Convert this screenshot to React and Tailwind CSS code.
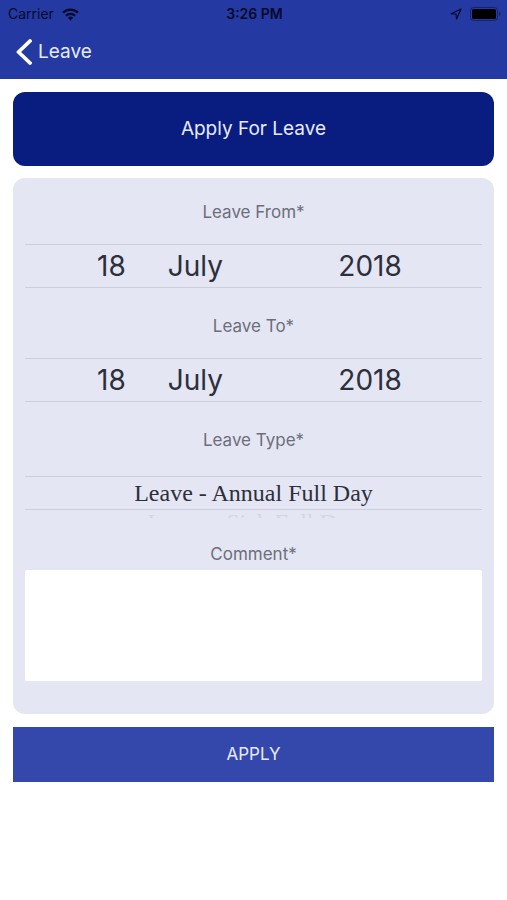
import { useState } from 'react'

const MONTHS = [
  'January', 'February', 'March', 'April', 'May', 'June',
  'July', 'August', 'September', 'October', 'November', 'December',
]
const DAYS  = Array.from({ length: 31 }, (_, i) => String(i + 1))
const YEARS = ['2017', '2018', '2019', '2020']

const LEAVE_TYPES = ['Leave - Annual Full Day', 'Leave - Sick Full Day']

const START = { day: '18', month: 'July', year: '2018' }

function WifiIcon() {
  return (
    <svg width="17" height="13" viewBox="0 0 17 13" fill="none" stroke="currentColor" strokeWidth="2.3">
      <path d="M1 4.7a10.8 10.8 0 0 1 15 0" />
      <path d="M3.9 7.7a6.6 6.6 0 0 1 9.2 0" />
      <path d="M8.5 12.6 5.9 9.9a3.7 3.7 0 0 1 5.2 0z" fill="currentColor" stroke="none" />
    </svg>
  )
}

function LocationIcon() {
  return (
    <svg width="12" height="12" viewBox="0 0 12 12" fill="none" stroke="currentColor" strokeWidth="1.2" strokeLinejoin="round">
      <path d="M11 1 1.2 5.8l4.8.2.6 5z" />
    </svg>
  )
}

function BatteryIcon() {
  return (
    <svg width="31" height="14" viewBox="0 0 31 14" fill="none">
      <rect x="0.5" y="0.5" width="27" height="13" rx="3" stroke="currentColor" strokeOpacity="0.45" />
      <rect x="2" y="2" width="24" height="10" rx="1.5" fill="black" />
      <path d="M29 4.8v4.4c1-.3 1.5-1.2 1.5-2.2s-.5-1.9-1.5-2.2z" fill="currentColor" fillOpacity="0.45" />
    </svg>
  )
}

function StatusBar() {
  return (
    <div className="grid h-7 grid-cols-3 items-center pr-1.5 pl-2 text-sm text-[#060a2a]">
      <div className="flex items-center gap-2">
        <span>Carrier</span>
        <WifiIcon />
      </div>
      <span className="text-center font-semibold">3:26 PM</span>
      <div className="flex items-center justify-end gap-2">
        <LocationIcon />
        <BatteryIcon />
      </div>
    </div>
  )
}

function PickerColumn({ label, options, value, onChange, className = '' }) {
  return (
    <select
      aria-label={label}
      value={value}
      onChange={(e) => onChange(e.target.value)}
      className={`w-full cursor-pointer appearance-none bg-transparent outline-none ${className}`}
    >
      {options.map((o) => <option key={o} value={o}>{o}</option>)}
    </select>
  )
}

function DateField({ id, label, value, onChange }) {
  const set = (key) => (v) => onChange({ ...value, [key]: v })

  return (
    <div role="group" aria-labelledby={id} className="mb-[26px]">
      <p id={id} className="mb-5 text-center text-[17px]/6 text-[#6c6e7a]">{label}</p>
      <div className="grid h-11 grid-cols-[101fr_213fr_144fr] items-center border-y border-[#cdcfdb] text-[28px]/10 text-[#2d2f3b]">
        <PickerColumn label="Day" options={DAYS} value={value.day} onChange={set('day')} className="text-right" />
        <PickerColumn label="Month" options={MONTHS} value={value.month} onChange={set('month')} className="pl-[42px]" />
        <PickerColumn label="Year" options={YEARS} value={value.year} onChange={set('year')} />
      </div>
    </div>
  )
}

export default function App() {
  const [from, setFrom]       = useState(START)
  const [to, setTo]           = useState(START)
  const [type, setType]       = useState(LEAVE_TYPES[0])
  const [comment, setComment] = useState('')

  const nextType = LEAVE_TYPES[LEAVE_TYPES.indexOf(type) + 1]

  return (
    <div className="min-h-screen bg-white font-['Inter',sans-serif]">
      <header className="bg-[#2439a2]">
        <StatusBar />
        <nav className="flex h-[51px] items-center px-4 pb-1">
          <a href="#back" className="flex items-center gap-1.5 text-[19px]/8 text-[#e6ebff]">
            <svg width="16" height="26" viewBox="0 0 16 26" fill="none" stroke="white" strokeWidth="3.8" strokeLinecap="round" strokeLinejoin="round">
              <path d="M14 2 2.5 13 14 24" />
            </svg>
            Leave
          </a>
        </nav>
      </header>

      <main className="px-[13px] py-[13px]">
        <h1 className="flex h-[74px] items-center justify-center rounded-xl bg-[#091c7f] text-[19px]/8 text-[#e6ebff]">
          Apply For Leave
        </h1>

        <form onSubmit={(e) => e.preventDefault()}>
          <div className="mt-3 mb-[13px] rounded-xl bg-[#e4e6f3] px-3 pt-[22px] pb-[33px]">
            <DateField id="leave-from" label="Leave From*" value={from} onChange={setFrom} />
            <DateField id="leave-to" label="Leave To*" value={to} onChange={setTo} />

            <label htmlFor="leave-type" className="mb-6 block text-center text-[17px]/6 text-[#6c6e7a]">
              Leave Type*
            </label>
            <div className="mb-6 text-center font-['Liberation_Serif',serif] text-2xl">
              <select
                id="leave-type"
                value={type}
                onChange={(e) => setType(e.target.value)}
                className="block h-[34px] w-full cursor-pointer appearance-none border-y border-[#cdcfdb] text-center text-[#2d2f3b] outline-none"
              >
                {LEAVE_TYPES.map((t) => <option key={t} value={t}>{t}</option>)}
              </select>
              {/* top edge of the next row in the wheel */}
              <div aria-hidden="true" className="h-2 overflow-hidden text-2xl/6 text-[#d4d6e3]">
                {nextType}
              </div>
            </div>

            <label htmlFor="comment" className="mb-1 block text-center text-[17px]/6 text-[#6c6e7a]">
              Comment*
            </label>
            <textarea
              id="comment"
              value={comment}
              onChange={(e) => setComment(e.target.value)}
              className="block h-[111px] w-full resize-none rounded-xs bg-white p-2 text-[17px] outline-none"
            />
          </div>

          <button type="submit" className="h-[55px] w-full cursor-pointer bg-[#3447aa] text-[17px] text-[#e6ebff]">
            APPLY
          </button>
        </form>
      </main>
    </div>
  )
}
